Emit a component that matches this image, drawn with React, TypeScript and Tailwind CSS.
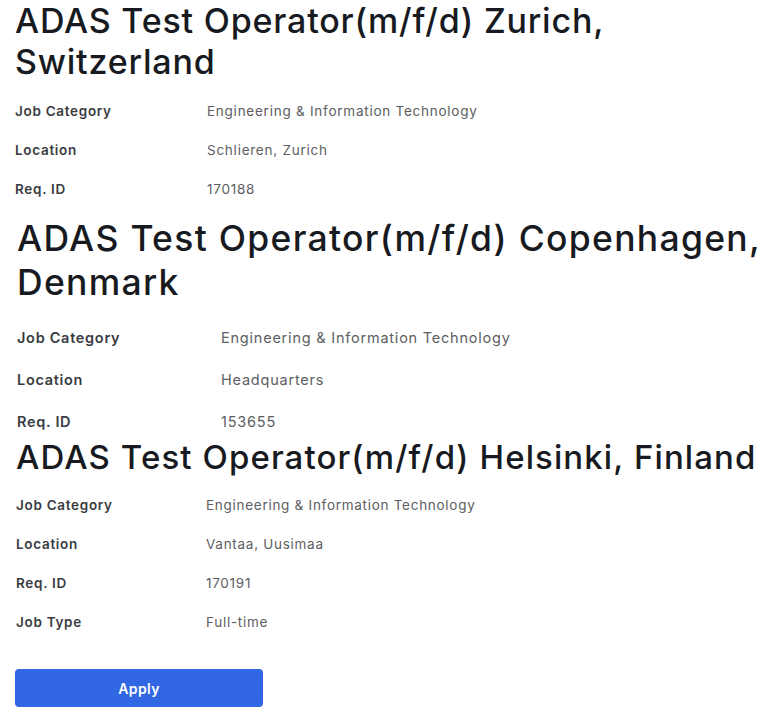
import React from "react";

type Row = [string, string];

const font = { fontFamily: "Inter, 'Noto Sans', sans-serif" };

function Rows({
  rows,
  labelCls,
  valueCls,
  gapCls,
  valueCol,
}: {
  rows: Row[];
  labelCls: string;
  valueCls: string;
  gapCls: string;
  valueCol: string;
}) {
  return (
    <div className={`flex flex-col ${gapCls}`}>
      {rows.map(([l, v]) => (
        <div key={l} className="flex">
          <div className={`${valueCol} shrink-0 ${labelCls}`}>{l}</div>
          <div className={valueCls}>{v}</div>
        </div>
      ))}
    </div>
  );
}

export default function App() {
  return (
    <div className="w-[768px] h-[717px] bg-white overflow-hidden text-[#171a20]" style={font}>
      {/* Section 1 */}
      <div className="pl-[15px]">
        <h1 className="text-[34px] leading-[41px] font-medium tracking-[0.8px]">
          ADAS Test Operator(m/f/d) Zurich,
          <br />
          Switzerland
        </h1>
        <div className="mt-[19px]">
          <Rows
            rows={[
              ["Job Category", "Engineering & Information Technology"],
              ["Location", "Schlieren, Zurich"],
              ["Req. ID", "170188"],
            ]}
            labelCls="text-[13.5px] leading-[20px] font-semibold tracking-[0.7px] text-[#393c41]"
            valueCls="text-[13.5px] leading-[20px] tracking-[0.75px] text-[#5c5e62]"
            gapCls="gap-[19px]"
            valueCol="w-[192px]"
          />
        </div>
      </div>

      {/* Section 2 */}
      <div className="pl-[17px] mt-[18px]">
        <h1 className="text-[35.5px] leading-[44px] font-medium tracking-[1.3px]">
          ADAS Test Operator(m/f/d) Copenhagen,
          <br />
          Denmark
        </h1>
        <div className="mt-[22px]">
          <Rows
            rows={[
              ["Job Category", "Engineering & Information Technology"],
              ["Location", "Headquarters"],
              ["Req. ID", "153655"],
            ]}
            labelCls="text-[14.5px] leading-[22px] font-semibold tracking-[0.7px] text-[#393c41]"
            valueCls="text-[14.5px] leading-[22px] tracking-[0.78px] text-[#5c5e62]"
            gapCls="gap-[20px]"
            valueCol="w-[204px]"
          />
        </div>
      </div>

      {/* Section 3 */}
      <div className="pl-[16px] mt-[4px]">
        <h1 className="text-[33px] leading-[40px] font-medium tracking-[1.1px] whitespace-nowrap">
          ADAS Test Operator(m/f/d) Helsinki, Finland
        </h1>
        <div className="mt-[18px]">
          <Rows
            rows={[
              ["Job Category", "Engineering & Information Technology"],
              ["Location", "Vantaa, Uusimaa"],
              ["Req. ID", "170191"],
              ["Job Type", "Full-time"],
            ]}
            labelCls="text-[13.5px] leading-[20px] font-semibold tracking-[0.7px] text-[#393c41]"
            valueCls="text-[13.5px] leading-[20px] tracking-[0.72px] text-[#5c5e62]"
            gapCls="gap-[19px]"
            valueCol="w-[190px]"
          />
        </div>
        <button className="mt-[37px] w-[248px] h-[38px] rounded-[4px] bg-[#3167e3] text-white text-[14px] font-semibold tracking-[0.4px] flex items-center justify-center -ml-px">
          Apply
        </button>
      </div>
    </div>
  );
}
